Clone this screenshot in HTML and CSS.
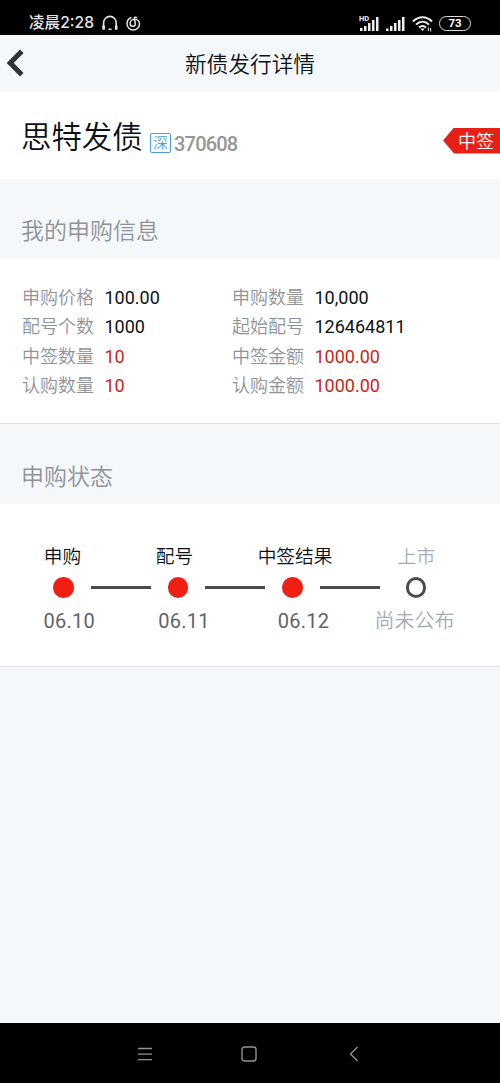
FILE: index.html
```html
<!DOCTYPE html>
<html lang="zh-CN">
<head>
    <meta charset="UTF-8">
    <meta name="viewport" content="width=device-width, initial-scale=1.0">
    <title>新债发行详情</title>
    <link rel="stylesheet" href="styles.css">
</head>
<body>
    <div class="status-bar">
        <span class="clock">凌晨2:28</span>
        <svg class="headset" width="18" height="16" viewBox="0 0 18 16" fill="none" stroke="#e4e4e4" stroke-width="1.6">
            <path d="M2.600 13V7.700a6.300 6.300 0 0 1 12.600 0V13"/>
            <path d="M2.600 10.500v4.300M15.200 10.500v4.300" stroke-width="2.600"/>
            <path d="M7.500 14.300h3"/>
        </svg>
        <svg class="music" width="15" height="15" viewBox="0 0 15 15" fill="none" stroke="#e4e4e4" stroke-width="1.500" stroke-linecap="round">
            <path d="M5 1.700C2.500 2.700 1 5 1 7.700 1 11.200 3.800 14 7.200 14s6.300-2.700 6.300-6c0-2.700-2-4.700-4.800-4.700-2.600 0-4.600 2-4.600 4.400 0 3.300 5.300 3.600 5.300.3L8.300 2.700C8 1.200 9.300.8 10.500 1.500"/>
        </svg>
        <svg class="signal" width="22" height="17" viewBox="0 0 22 17" fill="#f0f0f0">
            <text class="hd" x="0" y="5.800">HD</text>
            <path d="M1 13h2.500v3H1zM5 11h2.500v5H5zM9 8h2.500v8H9zM13 5h2.500v11H13zM17 2h2.500v14H17z"/>
        </svg>
        <svg class="signal-2" width="20" height="17" viewBox="0 0 20 17" fill="#f0f0f0">
            <path d="M0 13.500h2.500V16H0zM4 11h2.500v5H4zM8 8h2.500v8H8zM12 5h2.500v11H12zM16 2h2.500v14H16z"/>
        </svg>
        <svg class="wifi" width="21" height="17" viewBox="0 0 21 17" fill="none" stroke="#f0f0f0" stroke-width="2">
            <path d="M1 6.500C6.500.9 14.500.9 20 6.500M4 9.600c4-3.800 9-3.800 13 0M7 12.500c2.300-1.900 4.700-1.900 7 0"/>
            <path d="M8.200 13.600h4.600L10.500 16z" fill="#f0f0f0" stroke="none"/>
            <path d="M16.300 12.500v3.500M18.700 13v3.500" stroke-width="1"/>
        </svg>
        <span class="battery">73</span>
    </div>

    <div class="nav-bar">
        <svg class="back" width="19" height="28" viewBox="0 0 19 28" fill="none" stroke="#2e3336" stroke-width="5">
            <path d="M15.800 2.200 4.200 14l11.600 11.800"/>
        </svg>
        <h1>新债发行详情</h1>
    </div>

    <div class="bond">
        <h2>思特发债</h2>
        <span class="market">深</span>
        <span class="code">370608</span>
        <span class="tag">中签</span>
    </div>

    <h3>我的申购信息</h3>
    <div class="info">
        <div><label>申购价格</label><span>100.00</span></div>
        <div><label>申购数量</label><span>10,000</span></div>
        <div><label>配号个数</label><span>1000</span></div>
        <div><label>起始配号</label><span>126464811</span></div>
        <div><label>中签数量</label><span class="red">10</span></div>
        <div><label>中签金额</label><span class="red">1000.00</span></div>
        <div><label>认购数量</label><span class="red">10</span></div>
        <div><label>认购金额</label><span class="red">1000.00</span></div>
    </div>

    <h3 class="state-title">申购状态</h3>
    <div class="progress">
        <div class="names">
            <span>申购</span>
            <span>配号</span>
            <span>中签结果</span>
            <span class="pending">上市</span>
        </div>
        <div class="track">
            <i class="dot"></i>
            <i class="line"></i>
            <i class="dot"></i>
            <i class="line"></i>
            <i class="dot"></i>
            <i class="line"></i>
            <i class="dot empty"></i>
        </div>
        <div class="dates">
            <span>06.10</span>
            <span>06.11</span>
            <span>06.12</span>
            <span class="pending">尚未公布</span>
        </div>
    </div>

    <div class="system-bar">
        <svg width="16" height="16" viewBox="0 0 16 16" fill="none" stroke="#929292" stroke-width="1.300">
            <path d="M1 2.500h14M1 8.200h14M1 13.700h14"/>
        </svg>
        <svg width="16" height="16" viewBox="0 0 16 16" fill="none" stroke="#929292" stroke-width="1.400">
            <rect x="1" y="1" width="14" height="14" rx="2.500"/>
        </svg>
        <svg width="16" height="16" viewBox="0 0 16 16" fill="none" stroke="#929292" stroke-width="1.400">
            <path d="M12.500 1 5.500 8l7 7"/>
        </svg>
    </div>
</body>
</html>
```

FILE: styles.css
```css
* {
    box-sizing: border-box;
}
body {
    font-family: Roboto, "Noto Sans CJK SC", sans-serif;
    font-weight: 350;
    background-color: #f4f8fb;
    color: #0b1116;
    display: flex;
    flex-direction: column;
    height: 1083px;
    margin: 0;
    overflow: hidden;
    white-space: nowrap;
}
h1, h2, h3 {
    font-weight: 350;
    margin: 0;
}
svg {
    flex: none;
}
.status-bar {
    background-color: #000;
    color: #e4e4e4;
    display: flex;
    align-items: center;
    height: 35px;
    padding: 11px 0 0 29px;
}
.clock {
    font-family: Inter, "Noto Sans CJK SC", sans-serif;
    font-size: 15.6px;
    font-weight: 500;
    line-height: 20px;
    width: 72px;
}
.music {
    margin-left: 7px;
}
.signal {
    margin-left: auto;
}
.hd {
    font-size: 7.5px;
    font-weight: 700;
}
.signal-2 {
    margin-left: 5px;
}
.wifi {
    margin-left: 6px;
}
.battery {
    border: 1.5px solid #ddd;
    border-radius: 8px;
    color: #fff;
    font-size: 11.5px;
    font-weight: 700;
    line-height: 13px;
    text-align: center;
    width: 32px;
    height: 15px;
    margin: 0 29px 0 6px;
}
.nav-bar {
    display: flex;
    align-items: center;
    height: 57px;
    padding-left: 6px;
}
.nav-bar h1 {
    flex: 1;
    font-size: 21.7px;
    text-align: center;
    padding: 0 25px 2px 0;
}
.back {
    margin-bottom: 2px;
}
.bond {
    background-color: #fff;
    display: flex;
    align-items: center;
    height: 87px;
    padding-left: 21px;
}
.bond h2 {
    font-size: 30.4px;
    width: 129px;
    padding-bottom: 2px;
}
.market {
    border: 1.5px solid #4aa0d8;
    border-radius: 2px;
    color: #4aa0d8;
    font-size: 15px;
    line-height: 18px;
    text-align: center;
    width: 21px;
    height: 20px;
    margin-top: 15px;
}
.code {
    color: #969696;
    font-size: 20px;
    font-weight: 500;
    letter-spacing: -0.8px;
    margin: 16px 0 0 3px;
}
.tag {
    background-color: #e62015;
    clip-path: polygon(0 50%, 11px 0, 100% 0, 100% 100%, 11px 100%);
    color: #fff;
    font-size: 18px;
    line-height: 27px;
    width: 57px;
    height: 26px;
    padding-left: 15px;
    margin: 10px 0 0 auto;
}
h3 {
    color: #8f9396;
    font-size: 23px;
    line-height: 32px;
    height: 80px;
    padding: 37px 0 0 21px;
}
.state-title {
    padding-top: 38px;
}
.info {
    background-color: #fff;
    border-bottom: 1px solid #dfe2e5;
    display: grid;
    grid-template-columns: 210px 1fr;
    grid-auto-rows: 29.6px;
    height: 165px;
    padding: 23.7px 0 0 22px;
    font-size: 18px;
    line-height: 30px;
}
.info div {
    display: flex;
}
.info label {
    color: #8f9396;
    width: 82.5px;
}
.info span {
    font-weight: 400;
}
.info .red {
    color: #cb1f18;
}
.progress {
    background-color: #fff;
    border-bottom: 1px solid #dfe2e5;
    height: 163px;
    padding-top: 39px;
}
.names, .dates {
    display: grid;
    justify-items: center;
}
.names {
    grid-template-columns: 125px 99px 142px 101px;
    font-size: 18.7px;
    line-height: 28px;
}
.track {
    display: flex;
    align-items: center;
    gap: 17px;
    height: 33px;
    padding-left: 53px;
}
.dot {
    background-color: #ef2013;
    border-radius: 50%;
    width: 20.5px;
    height: 20.5px;
}
.dot.empty {
    background-color: #fff;
    border: 3px solid #484c4f;
    margin-left: 9px;
}
.line {
    background-color: #484c4f;
    width: 60px;
    height: 3px;
}
.dates {
    grid-template-columns: 138.5px 91px 148px 74px;
    color: #606468;
    font-size: 20px;
    font-weight: 400;
    line-height: 34px;
    letter-spacing: 0.3px;
}
.pending {
    color: #a5acb3;
    font-weight: 350;
}
.dates .pending {
    letter-spacing: 0;
}
.system-bar {
    background-color: #000;
    display: flex;
    align-items: center;
    gap: 88px;
    height: 60px;
    padding: 2px 0 0 137px;
    margin-top: auto;
}
```
